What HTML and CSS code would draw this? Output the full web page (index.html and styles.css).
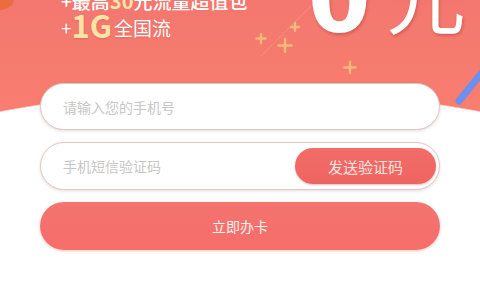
FILE: index.html
```html
<!doctype html>
<html lang="zh-CN">
<head>
    <meta charset="UTF-8">
    <title>立即办卡</title>
    <link rel="stylesheet" href="styles.css">
</head>
<body>
    <header class="banner">
        <div class="promo">
            <div class="promo-text">
                <p class="line1">+最高<em>30</em>元流量超值包</p>
                <p class="line2">+<em>1G</em>全国流</p>
            </div>
            <div class="price"><b>0</b><span>元</span></div>
        </div>
        <svg class="deco" width="480" height="110" viewBox="0 0 480 110">
            <g stroke="#f6c07c" stroke-width="2.4" stroke-linecap="round" opacity=".9">
                <path d="M261 34v9M256.5 38.5h9"/>
                <path d="M285 39v13M278.5 45.5h13"/>
                <path d="M295 23v8M291 27h8"/>
                <path d="M350 62v11M344.5 67.5h11"/>
            </g>
            <path d="M261 56L311 6" stroke="#f9a48a" stroke-width="1" opacity=".5"/>
            <path d="M484 70L459 101" stroke="#6d8ff0" stroke-width="7" stroke-linecap="round"/>
        </svg>
    </header>
    <form class="card-form">
        <div class="field">
            <input type="text" placeholder="请输入您的手机号">
        </div>
        <div class="field">
            <input type="text" placeholder="手机短信验证码">
            <button type="button" class="send">发送验证码</button>
        </div>
        <button type="button" class="submit">立即办卡</button>
    </form>
</body>
</html>
```

FILE: styles.css
```css
*{
    margin: 0;
    padding: 0;
    box-sizing: border-box;
}
body{
    width: 480px;
    height: 300px;
    overflow: hidden;
    background: #fff;
    font-family: "Noto Sans CJK SC", "Noto Sans", sans-serif;
}
.banner{
    position: relative;
    height: 112px;
    overflow: hidden;
    background:
        radial-gradient(ellipse 14px 10px at 0 0, #ec6c40 96%, transparent 100%),
        radial-gradient(ellipse 700px 360px at 50% 449px, #fdfcfc 99.6%, transparent 100%),
        linear-gradient(180deg, #f3776f 0%, #f57b6e 50%, #f97e70 100%);
}
.promo{
    display: flex;
    align-items: flex-start;
}
.promo-text{
    padding-left: 61px;
    width: 308px;
    color: #fff;
}
.promo-text em{
    font-style: normal;
    color: #fbe3a6;
}
.line1{
    margin-top: -10px;
    font-size: 19px;
    line-height: 22px;
    font-weight: 500;
    white-space: nowrap;
}
.line1 em{
    font-weight: 700;
    font-size: 20px;
}
.line2{
    font-size: 19px;
    line-height: 26px;
    white-space: nowrap;
    text-shadow: 0 1px 2px rgba(190, 70, 60, .35);
}
.line2 em{
    font-size: 31px;
    font-weight: 700;
    margin-right: 2px;
    vertical-align: -2px;
}
.price{
    display: flex;
    align-items: flex-start;
    color: #fff;
    white-space: nowrap;
    text-shadow: 1px 2px 3px rgba(170, 60, 50, .45);
}
.price b{
    margin-top: -44px;
    font: bold 90px/90px "DejaVu Sans", sans-serif;
}
.price span{
    margin-top: -52px;
    margin-left: 15px;
    font-size: 80px;
    line-height: 90px;
    font-weight: 400;
}
.deco{
    position: absolute;
    top: 0;
    left: 0;
}
.card-form{
    position: relative;
    display: flex;
    flex-direction: column;
    gap: 12px;
    margin-top: -29px;
    padding: 0 40px;
}
.field{
    display: flex;
    align-items: center;
    height: 47px;
    padding: 0 3px 0 22px;
    background: #fff;
    border: 1.5px solid #d9c8c3;
    border-radius: 24px;
    box-shadow: 0 1px 3px rgba(150, 110, 100, .25);
}
.field + .field{
    height: 48px;
    border-color: #e2c9c4;
}
.field input{
    flex: 1;
    min-width: 0;
    border: 0;
    outline: 0;
    background: transparent;
    font: 14px "Noto Sans CJK SC", sans-serif;
    color: #555;
}
.field input::placeholder{
    color: #c9c6c6;
}
.send{
    width: 141px;
    height: 36px;
    border: 0;
    border-radius: 18px;
    background: linear-gradient(180deg, #f36c68, #ee6461);
    color: #fde4e0;
    font: 15px "Noto Sans CJK SC", sans-serif;
    box-shadow: 0 1px 2px rgba(180, 60, 60, .35);
}
.submit{
    height: 48px;
    border: 0;
    border-radius: 24px;
    background: linear-gradient(180deg, #f4736f, #f56e6a);
    color: #fff2ef;
    font: 14px "Noto Sans CJK SC", sans-serif;
    box-shadow: 0 1px 3px rgba(200, 90, 80, .35);
}
```
